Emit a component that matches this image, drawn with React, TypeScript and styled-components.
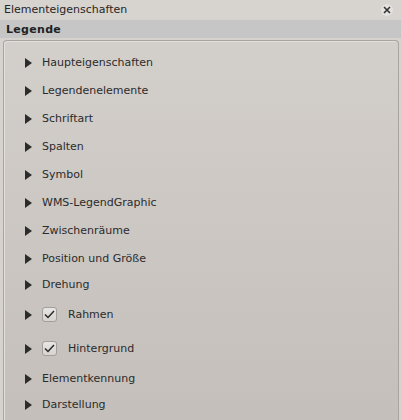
import React from "react";
import styled, { createGlobalStyle } from "styled-components";

const GlobalStyle = createGlobalStyle`
  html, body {
    margin: 0;
    padding: 0;
    background: #d6d2ce;
  }
  body {
    font-family: "DejaVu Sans", "Liberation Sans", sans-serif;
    font-size: 11px;
    color: #2b2b2b;
  }
`;

const Dock = styled.div`
  width: 401px;
  height: 420px;
  overflow: hidden;
  display: flex;
  flex-direction: column;
  background: #d6d2ce;
`;

const TitleBar = styled.div`
  height: 20px;
  display: flex;
  align-items: center;
  justify-content: space-between;
  padding: 0 4px 0 4px;
  background: #d7d3cf;
`;

const Title = styled.span`
  font-size: 11px;
  color: #262626;
  margin-top: -2px;
`;

const CloseButton = styled.div`
  width: 12px;
  height: 12px;
  border-radius: 50%;
  background: #e4e1de;
  display: flex;
  align-items: center;
  justify-content: center;
  margin-right: 4px;
`;

const SectionHeader = styled.div`
  height: 18px;
  display: flex;
  align-items: center;
  padding-left: 6px;
  background: #c6c6c6;
  font-weight: bold;
  font-size: 11px;
  letter-spacing: 0.3px;
  color: #222;
`;

const Panel = styled.div`
  flex: 1;
  margin: 2px 2px 0 3px;
  border: 1px solid #a8a4a0;
  border-bottom: none;
  border-radius: 4px 4px 0 0;
  background: linear-gradient(#d3cfcb, #c4bfba);
  box-shadow: inset 1px 1px 0 #e2dfdc;
  padding-top: 7px;
  display: flex;
  flex-direction: column;
`;

const Row = styled.div<{ $h: number }>`
  height: ${(p) => p.$h}px;
  flex-shrink: 0;
  display: flex;
  align-items: center;
  padding-left: 21px;
`;

const Arrow = styled.span`
  width: 0;
  height: 0;
  border-top: 5px solid transparent;
  border-bottom: 5px solid transparent;
  border-left: 7px solid #2c2c2c;
  margin-right: 10px;
  margin-top: 1px;
`;

const Label = styled.span`
  font-size: 11px;
  color: #2b2b2b;
`;

const Check = styled.span`
  width: 15px;
  height: 15px;
  box-sizing: border-box;
  border: 1px solid #a29e9a;
  border-radius: 3px;
  background: linear-gradient(#e8e6e4, #d6d3d0);
  display: flex;
  align-items: center;
  justify-content: center;
  margin-right: 11px;
`;

type Item = { label: string; h: number; checked?: boolean };

const items: Item[] = [
  { label: "Haupteigenschaften", h: 28 },
  { label: "Legendenelemente", h: 28 },
  { label: "Schriftart", h: 28 },
  { label: "Spalten", h: 28 },
  { label: "Symbol", h: 28 },
  { label: "WMS-LegendGraphic", h: 28 },
  { label: "Zwischenräume", h: 28 },
  { label: "Position und Größe", h: 28 },
  { label: "Drehung", h: 25 },
  { label: "Rahmen", h: 34, checked: true },
  { label: "Hintergrund", h: 34, checked: true },
  { label: "Elementkennung", h: 26 },
  { label: "Darstellung", h: 26 },
];

function CheckMark() {
  return (
    <svg width="11" height="9" viewBox="0 0 11 9">
      <path d="M1 4.5 L4 7.5 L10 1" fill="none" stroke="#2a2a2a" strokeWidth="1.5" />
    </svg>
  );
}

export default function App() {
  return (
    <Dock>
      <GlobalStyle />
      <TitleBar>
        <Title>Elementeigenschaften</Title>
        <CloseButton>
          <svg width="8" height="8" viewBox="0 0 8 8">
            <path d="M1 1 L7 7 M7 1 L1 7" stroke="#333" strokeWidth="1.6" />
          </svg>
        </CloseButton>
      </TitleBar>
      <SectionHeader>Legende</SectionHeader>
      <Panel>
        {items.map((it) => (
          <Row key={it.label} $h={it.h}>
            <Arrow />
            {it.checked && (
              <Check>
                <CheckMark />
              </Check>
            )}
            <Label>{it.label}</Label>
          </Row>
        ))}
      </Panel>
    </Dock>
  );
}
